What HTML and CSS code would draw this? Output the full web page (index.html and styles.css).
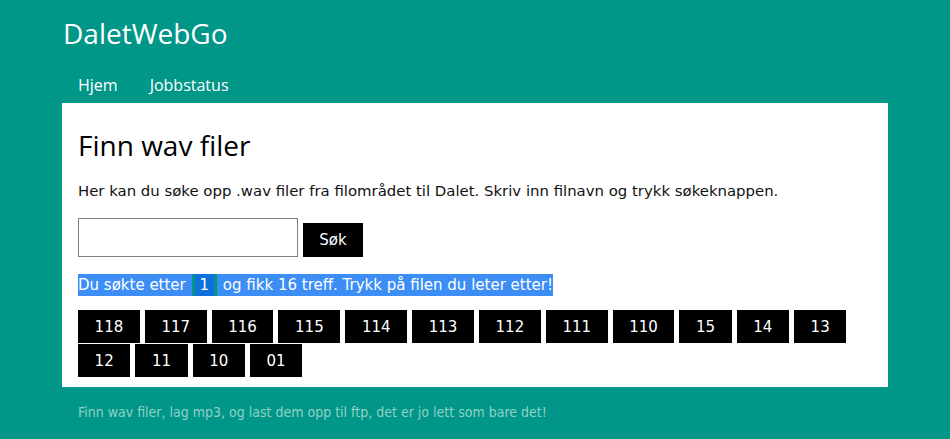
FILE: index.html
```html
<!DOCTYPE html>
<html>
<head>
<meta charset="utf-8">
<link rel="stylesheet" href="styles.css">
</head>
<body>
<div class="page">
  <header class="brand">DaletWebGo</header>
  <nav class="nav">
    <a class="nav-link" href="#">Hjem</a>
    <a class="nav-link" href="#">Jobbstatus</a>
  </nav>
  <main class="card">
    <h1 class="title">Finn wav filer</h1>
    <p class="intro">Her kan du søke opp .wav filer fra filområdet til Dalet. Skriv inn filnavn og trykk søkeknappen.</p>
    <form class="search">
      <input class="search-input" type="text">
      <button class="search-btn" type="button">Søk</button>
    </form>
    <p class="result"><span class="sel">Du søkte etter <span class="term">1</span> og fikk 16 treff. Trykk på filen du leter etter!</span></p>
    <div class="files">
      <button class="file">118</button>
      <button class="file">117</button>
      <button class="file">116</button>
      <button class="file">115</button>
      <button class="file">114</button>
      <button class="file">113</button>
      <button class="file">112</button>
      <button class="file">111</button>
      <button class="file">110</button>
      <button class="file">15</button>
      <button class="file">14</button>
      <button class="file">13</button>
      <button class="file">12</button>
      <button class="file">11</button>
      <button class="file">10</button>
      <button class="file">01</button>
    </div>
  </main>
  <footer class="footer">Finn wav filer, lag mp3, og last dem opp til ftp, det er jo lett som bare det!</footer>
</div>
</body>
</html>
```
FILE: styles.css
```css
html, body {
  margin: 0;
  padding: 0;
  background: #009688;
}
.page {
  padding-left: 62px;
  width: 826px;
  font-family: "DejaVu Sans", Verdana, sans-serif;
}
.brand {
  font-family: "Open Sans", sans-serif;
  font-size: 28px;
  color: #fff;
  padding: 13px 0 0 1px;
  line-height: 40px;
}
.nav {
  display: flex;
  margin-top: 14px;
  height: 36px;
  align-items: center;
}
.nav-link {
  color: #fff;
  text-decoration: none;
  font-family: "Open Sans", sans-serif;
  font-size: 16px;
  padding: 0 16px;
}
.card {
  background: #fff;
  padding: 16px 16px 10px 16px;
}
.title {
  font-family: "Open Sans", sans-serif;
  font-weight: normal;
  font-size: 28px;
  margin: 6px 0 17px 0;
  line-height: 40px;
  color: #000;
}
.intro {
  font-size: 14.9px;
  margin: 0 0 18px 0;
  color: #111;
}
.search {
  display: flex;
  align-items: flex-end;
  gap: 5px;
}
.search-input {
  width: 220px;
  height: 39px;
  box-sizing: border-box;
  border: 1px solid #808080;
  margin: 0;
}
.search-btn {
  background: #000;
  color: #fff;
  border: none;
  height: 34px;
  width: 60px;
  font-family: "DejaVu Sans", Verdana, sans-serif;
  font-size: 15px;
}
.result {
  margin: 17px 0 14px 0;
  font-size: 15px;
  line-height: 22px;
}
.sel {
  background: #3c8ef5;
  color: #fff;
  display: inline-block;
}
.term {
  display: inline-block;
  background: #0f6fdc;
  border: 3px solid #009688;
  border-top: 0;
  border-bottom: 0;
  padding: 0 5px;
  margin: 0 1px;
}
.files {
  display: flex;
  flex-wrap: wrap;
  column-gap: 5px;
  row-gap: 1px;
}
.file {
  background: #000;
  color: #fff;
  border: none;
  height: 33px;
  padding: 0 16.6px;
  font-family: "DejaVu Sans", Verdana, sans-serif;
  font-size: 15px;
  margin: 0;
}
.footer {
  padding: 17px 0 0 16px;
  color: #8fd2c5;
  font-size: 14px;
  font-family: "DejaVu Sans Condensed", "DejaVu Sans", sans-serif;
  font-stretch: condensed;
}
```
